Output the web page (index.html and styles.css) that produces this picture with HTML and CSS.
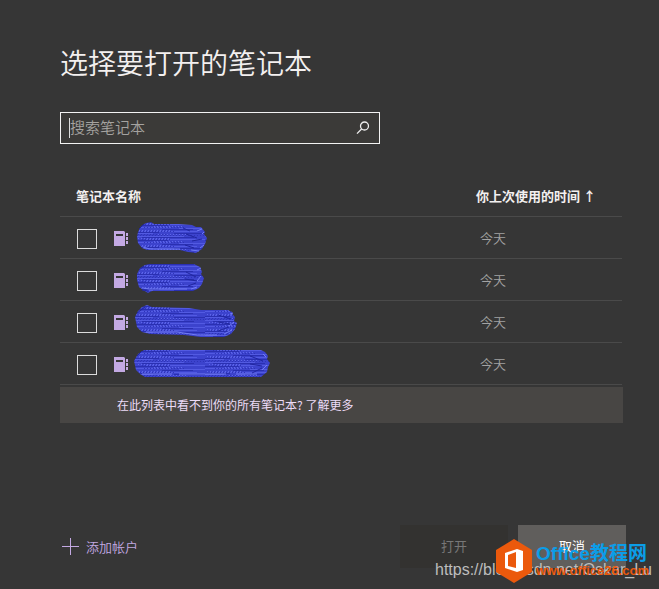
FILE: index.html
```html
<!DOCTYPE html>
<html lang="zh-CN">
<head>
<meta charset="utf-8">
<title>选择要打开的笔记本</title>
<link rel="stylesheet" href="styles.css">
</head>
<body>
<svg class="defs" width="0" height="0" aria-hidden="true">
  <defs>
    <symbol id="notebook" viewBox="0 0 15 16">
      <path fill="#c3a9e3" fill-rule="evenodd" d="M0 0h10l1 1v14H0zM2 3v2h7V3z"/>
      <path fill="#c3a9e3" d="M12 2h2v3h-2zM12 6h2v3h-2zM12 10h2v3h-2z"/>
    </symbol>
    <pattern id="strokes" width="71" height="15" patternUnits="userSpaceOnUse">
      <rect width="71" height="15" fill="#3c43cd"/>
      <path stroke="#525ae2" d="M0 1.500h50M12 4.500h59M0 7.500h38M45 8.500h26M5 11.500h58M0 13.500h19"/>
      <path stroke="#2a30b2" d="M8 2.500h52M0 5.500h34M28 9.500h31M0 12.500h25M40 13.500h31"/>
      <path stroke="#5e67ea" stroke-dasharray="1 2" d="M4 3.500h32M20 6.500h30M2 10.500h35M24 14.500h30"/>
      <path stroke="#2e34b8" stroke-dasharray="1 2" d="M0 0.500h71M10 7.500h40M4 14.500h28M8 4.500h30M6 11.500h34"/>
    </pattern>
  </defs>
</svg>
<main class="picker">
  <h1 class="title">选择要打开的笔记本</h1>
  <form class="search">
    <input class="search-input" type="text" placeholder="搜索笔记本" aria-label="搜索笔记本">
    <button class="search-button" type="button" aria-label="搜索">
      <svg width="14" height="14" viewBox="0 0 14 14" fill="none" stroke="#eee" stroke-width="1.300"><circle cx="8.500" cy="5" r="4"/><path d="M5.600 8L1 12.600"/></svg>
    </button>
  </form>
  <table class="notebooks">
    <thead>
      <tr><th class="name-head" colspan="3">笔记本名称</th><th class="time">你上次使用的时间 ↑</th></tr>
    </thead>
    <tbody>
      <tr>
        <td class="pick"><input type="checkbox" aria-label="笔记本 1"></td>
        <td class="icon"><svg width="15" height="16"><use href="#notebook"/></svg></td>
        <td class="name"><svg width="138" height="34"><path fill="url(#strokes)" d="M4 12L7 6 12 3 17 2 20 4H45L58 5 62 7 67 7 71 12 70 14 73 18 71 24 68 29 62 33 54 32 46 30H13L8 28 4 23 3 17z"/><path class="glint" d="M9 27l7 2h30M57 30l8 1M68 14l2-2M70 25l-4 3M63 11l5-2"/><path class="shade" d="M5 9l5-5M49 8l7 3M52 14l11 4M58 21l10-2M51 25l9 3"/></svg></td>
        <td class="time">今天</td>
      </tr>
      <tr>
        <td class="pick"><input type="checkbox" aria-label="笔记本 2"></td>
        <td class="icon"><svg width="15" height="16"><use href="#notebook"/></svg></td>
        <td class="name"><svg width="138" height="34"><path fill="url(#strokes)" d="M3 12L6 6 11 3 15 2H60L66 5 68 10 67 12 70 16 68 22 65 26 59 29H18L14 31 9 28 5 25 3 18z"/><path class="glint" d="M9 26l6 1h38M63 8l4-2M67 14l-4 5M63 25l-6 2"/><path class="shade" d="M5 8l5-4M52 10l10 5M51 17l12 2M54 24l8-3M8 28l7 1"/></svg></td>
        <td class="time">今天</td>
      </tr>
      <tr>
        <td class="pick"><input type="checkbox" aria-label="笔记本 3"></td>
        <td class="icon"><svg width="15" height="16"><use href="#notebook"/></svg></td>
        <td class="name"><svg width="138" height="34"><path fill="url(#strokes)" d="M1 13L4 7 8 3 13 1 18 3 55 4 67 6H94L98 8 99 11 101 13 100 17 103 19 101 25 97 30 90 33H67L50 31 16 30 8 28 3 23z"/><path class="glint" d="M12 28h31l20 3h20M96 10l3-1M100 18l-5 4M98 26l-8 4"/><path class="shade" d="M3 9l8-6M84 11l13 4M84 18l12 2M84 27l11-4"/></svg></td>
        <td class="time">今天</td>
      </tr>
      <tr>
        <td class="pick"><input type="checkbox" aria-label="笔记本 4"></td>
        <td class="icon"><svg width="15" height="16"><use href="#notebook"/></svg></td>
        <td class="name"><svg width="138" height="34"><path fill="url(#strokes)" d="M0 15L4 8 10 4H127L131 6 134 10 133 13 136 17 134 21 133 26 127 31H11L6 28 2 24z"/><path class="glint" d="M8 28h30M45 28h47M102 28h21M129 8l3 3M133 19l-5 5"/><path class="shade" d="M3 10l5-5M116 10l13 5M116 18l12 2M118 27l10-5"/></svg></td>
        <td class="time">今天</td>
      </tr>
    </tbody>
  </table>
  <p class="note"><a href="#">在此列表中看不到你的所有笔记本? 了解更多</a></p>
  <footer class="actions">
    <button class="add" type="button">
      <svg width="17" height="17" viewBox="0 0 17 17" stroke="#c3a9e3"><path d="M8.500 0v17M0 8.500h17"/></svg>
      添加帐户
    </button>
    <button class="button" type="button" disabled>打开</button>
    <button class="button cancel" type="button">取消</button>
  </footer>
</main>
<div class="watermark">https://blog.csdn.net/Oskar_Lu</div>
<div class="brand">
  <svg width="36" height="44" viewBox="0 0 36 44"><path fill="#eb590c" d="M18 0L36 11V33L18 44 0 33V11z"/><path fill="#fff" fill-rule="evenodd" d="M9 14L21 10 27 12V31L21 33 9 29zM12 16V27L20 29V13z"/></svg>
  <div class="brand-text"><span class="brand-name">Office教程网</span><span class="brand-url">www.office26.com</span></div>
</div>
</body>
</html>
```
FILE: styles.css
```css
* { box-sizing: border-box; }

body {
  margin: 0;
  min-height: 100vh;
  position: relative;
  overflow: hidden;
  background: #363636;
  color: #f3f0f0;
  font: 13px/20px "Noto Sans CJK SC", "Liberation Sans", sans-serif;
}

button, input { font: inherit; color: inherit; }
button { padding: 0; border: 0; background: none; }
svg { display: block; }
.defs { position: absolute; }

.picker {
  min-height: 100vh;
  display: flex;
  flex-direction: column;
  padding: 42px 33px 21px 60px;
}

.title {
  margin: 0;
  font-size: 28px;
  line-height: 40px;
  font-weight: 350;
}

.search {
  display: flex;
  align-items: center;
  width: 320px;
  max-width: 100%;
  height: 32px;
  margin-top: 30px;
  border: 1px solid #f3f3f3;
  background: #3b3a38;
}

.search-input {
  flex: 1;
  min-width: 0;
  height: 20px;
  margin-left: 8px;
  padding: 0 0 2px;
  border: 0;
  border-left: 1px solid #ddd;
  outline: 0;
  background: none;
  font-size: 15px;
  font-weight: 350;
}

.search-input::placeholder { color: #a5a3a0; }
.search-button { padding: 0 9px; }

.notebooks {
  width: 562px;
  max-width: 100%;
  margin-top: 32px;
  border-collapse: collapse;
}

.notebooks tr { border-bottom: 1px solid #4a4a4a; }
.notebooks th, .notebooks td { padding: 0; text-align: left; }
.notebooks th { height: 40px; font-weight: 700; }
.notebooks td { height: 42px; color: #a3a3a3; }
.notebooks .name-head { padding-left: 16px; }
.notebooks .pick { width: 54px; padding: 2px 0 0 17px; }
.notebooks .icon { width: 20px; padding-top: 4px; }
.notebooks .time { width: 146px; }
.notebooks td.time { padding: 2px 0 0 4px; font-weight: 350; }

.pick input {
  display: block;
  appearance: none;
  width: 20px;
  height: 20px;
  margin: 2px 0 0;
  border: 1px solid #dcdcdc;
}

.glint, .shade { fill: none; }
.glint { stroke: #727df5; }
.shade { stroke: #2026a0; }

.note {
  width: 563px;
  max-width: 100%;
  margin: 2px 0 0;
  padding: 8px 57px;
  background: #484644;
  font-size: 12px;
}

.note a { color: #ecdcf8; text-decoration: none; }

.actions {
  display: flex;
  gap: 10px;
  margin-top: auto;
}

.add {
  display: flex;
  align-items: center;
  gap: 7px;
  margin-right: auto;
  padding-left: 2px;
  color: #c3a9e3;
  font-weight: 350;
}

.button {
  width: 108px;
  height: 43px;
  padding-bottom: 2px;
  background: #333230;
  color: #777;
  font-size: 13px;
}

.cancel { background: #605e5c; color: #fff; }

.watermark {
  position: absolute;
  right: 7px;
  bottom: 8px;
  color: #bdbdbd;
  font: 16px/22px "Liberation Sans", sans-serif;
}

.brand {
  position: absolute;
  right: 10px;
  bottom: 6px;
  display: flex;
  align-items: center;
  gap: 4px;
}

.brand-text { display: flex; flex-direction: column; }

.brand-name {
  color: #0b9de8;
  font: 700 19px/20px "Liberation Sans", "Noto Sans CJK SC", sans-serif;
}

.brand-url {
  color: #eb590c;
  font: 700 13px/14px "Liberation Sans", sans-serif;
}
```
